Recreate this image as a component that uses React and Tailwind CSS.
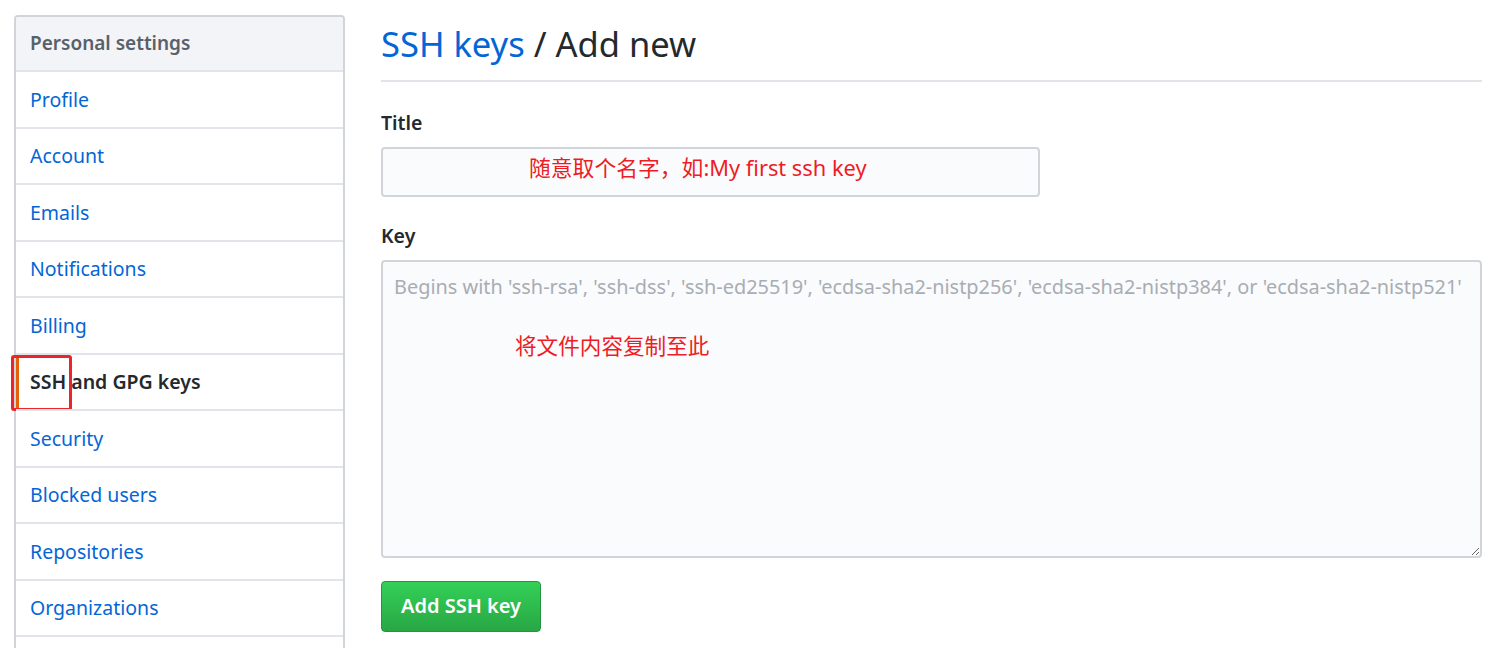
const MENU = [
  'Profile',
  'Account',
  'Emails',
  'Notifications',
  'Billing',
  'SSH and GPG keys',
  'Security',
  'Blocked users',
  'Repositories',
  'Organizations',
  '',
]

const FONT = "font-['Noto_Sans','Noto_Sans_CJK_SC',sans-serif]"

function SideMenu() {
  return (
    <nav className="w-[331px] shrink-0 rounded-t-[4px] border-2 border-b-0 border-[#d1d5da] bg-white">
      <div className="flex h-[53px] items-center rounded-t-[3px] bg-[#f3f4f7] px-[14px] text-[19px] font-semibold text-[#586069]">
        Personal settings
      </div>
      {MENU.map((item) => {
        const active = item === 'SSH and GPG keys'
        return (
          <div
            key={item || 'more'}
            className={`relative flex h-[56.5px] items-center border-t-2 border-[#e1e4e8] px-[14px] text-[19.5px] ${
              active ? 'text-[#24292e]' : 'text-[#0366d6]'
            }`}
          >
            {active && (
              <>
                <span className="absolute bottom-0 left-0 top-0 w-[3px] bg-[#e36209]" />
                <span className="absolute left-[-5px] top-0 h-[56px] w-[61px] rounded-[3px] border-[3px] border-[#e8262b]" />
              </>
            )}
            <span className={active ? 'font-semibold' : ''}>{item}</span>
          </div>
        )
      })}
    </nav>
  )
}

export default function App() {
  return (
    <div className={`flex h-[648px] w-[1495px] gap-[36px] overflow-hidden bg-white pl-[14px] pt-[15px] ${FONT}`}>
      <SideMenu />
      <main className="flex w-[1101px] flex-col">
        <h1 className="flex h-[67px] items-center border-b-2 border-[#e1e4e8] pb-[8px] text-[34.5px] text-[#24292e]">
          <span className="text-[#0366d6]">SSH keys</span>
          <span>&nbsp;/ Add new</span>
        </h1>

        <label className="mt-[26px] text-[19.5px] font-semibold text-[#24292e]">Title</label>
        <div className="mt-[10px] flex h-[50px] w-[659px] items-center rounded-[4px] border-2 border-[#d1d5da] bg-[#fafbfc] pb-[7px] pl-[146px] text-[21.8px] text-[#ee1c25]">
          随意取个名字，如:My first ssh key
        </div>

        <label className="mt-[24px] text-[19.5px] font-semibold text-[#24292e]">Key</label>
        <div className="relative mt-[9px]">
          <textarea
            wrap="off"
            className="block h-[298px] w-full resize-y overflow-hidden rounded-[4px] border-2 border-[#d1d5da] bg-[#fafbfc] px-[11px] pb-[12px] pt-[10px] text-[19.9px] text-[#24292e] outline-none placeholder:text-[#a8adb3]"
            placeholder="Begins with 'ssh-rsa', 'ssh-dss', 'ssh-ed25519', 'ecdsa-sha2-nistp256', 'ecdsa-sha2-nistp384', or 'ecdsa-sha2-nistp521'"
          />
          <span className="pointer-events-none absolute left-[134px] top-[70px] text-[21.6px] text-[#ee1c25]">
            将文件内容复制至此
          </span>
        </div>

        <div className="mt-[23px]">
          <button className="h-[51px] w-[160px] rounded-[4px] border border-[#23963d] bg-gradient-to-b from-[#34d058] to-[#28a745] text-[20px] font-semibold text-white">
            Add SSH key
          </button>
        </div>
      </main>
    </div>
  )
}
